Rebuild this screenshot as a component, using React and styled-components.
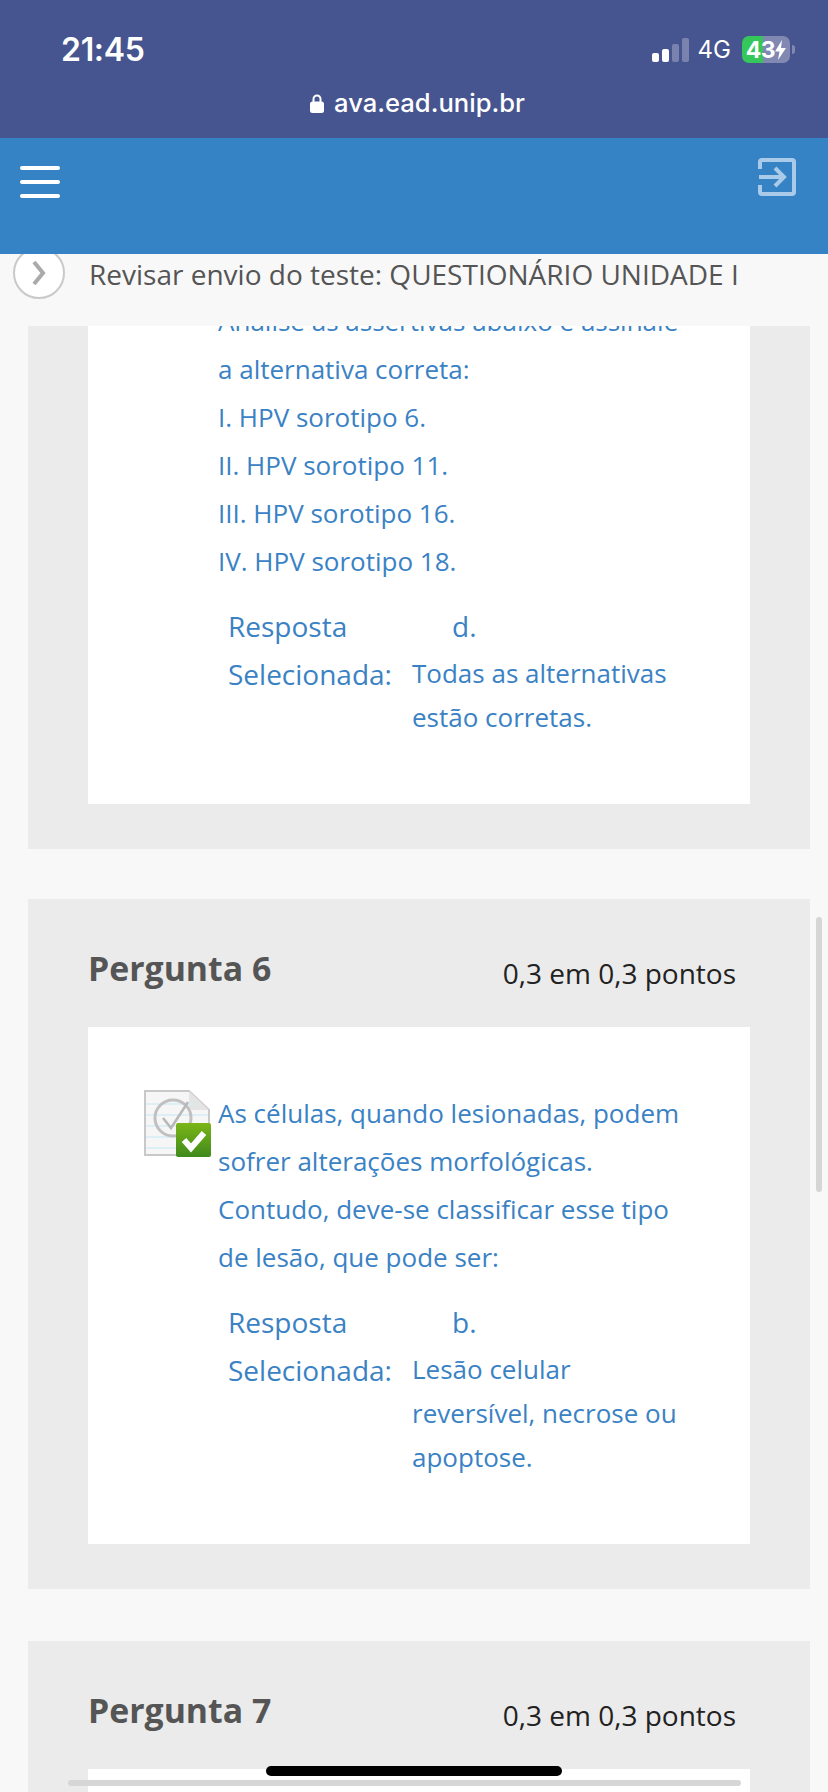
import React from 'react';
import styled, { createGlobalStyle } from 'styled-components';

const GlobalStyle = createGlobalStyle`
  html, body {
    margin: 0;
    padding: 0;
    background: #f8f8f8;
  }
  * {
    box-sizing: border-box;
  }
`;

const Screen = styled.div`
  position: relative;
  width: 828px;
  height: 1792px;
  overflow: hidden;
  display: flex;
  flex-direction: column;
  background: #f8f8f8;
  font-family: "Open Sans", "Noto Sans", sans-serif;
`;

const BrowserBar = styled.header`
  height: 138px;
  flex: none;
  padding: 0 38px 0 61px;
  background: #46558f;
  color: #fff;
  font-family: Inter, "Liberation Sans", sans-serif;
`;

const StatusRow = styled.div`
  height: 92px;
  display: flex;
  align-items: flex-start;
  justify-content: space-between;
  padding-top: 30px;
`;

const Clock = styled.span`
  font-size: 32px;
  line-height: 40px;
  font-weight: 600;
  letter-spacing: -0.3px;
`;

const StatusIcons = styled.div`
  display: flex;
  align-items: center;
  height: 27px;
  margin-top: 6px;
`;

const Network = styled.span`
  margin: 0 11px 0 9px;
  font-size: 24px;
  font-weight: 400;
`;

const Battery = styled.div`
  position: relative;
  width: 48px;
  height: 27px;
  display: flex;
  align-items: center;
  justify-content: center;
  border-radius: 7px;
  background: linear-gradient(90deg, #35c759 0 21px, #8189b3 21px);
  font-size: 23px;
  font-weight: 700;
  letter-spacing: -0.5px;

  &::after {
    content: '';
    position: absolute;
    right: -5px;
    top: 9px;
    width: 3px;
    height: 9px;
    border-radius: 0 3px 3px 0;
    background: #8189b3;
  }
`;

const AddressRow = styled.div`
  display: flex;
  align-items: center;
  justify-content: center;
  gap: 10px;
  margin: -1px -38px 0 -61px;
  padding-left: 7px;
  font-size: 25.6px;
  line-height: 24px;
  font-weight: 500;
`;

const TopBar = styled.div`
  position: relative;
  z-index: 1;
  height: 116px;
  flex: none;
  display: flex;
  justify-content: space-between;
  align-items: flex-start;
  padding: 20px 32px 0 20px;
  background: #3582c4;
`;

const MenuButton = styled.div`
  width: 40px;
  display: flex;
  flex-direction: column;
  gap: 10px;
  margin-top: 8px;
`;

const MenuLine = styled.span`
  height: 4px;
  border-radius: 2px;
  background: #fff;
`;

const PageTitleBar = styled.div`
  height: 72px;
  flex: none;
  display: flex;
  align-items: flex-start;
  gap: 24px;
  padding-left: 13px;
`;

const BackCircle = styled.div`
  width: 52px;
  height: 52px;
  flex: none;
  margin-top: -7px;
  display: flex;
  align-items: center;
  justify-content: center;
  border: 2px solid #c9c9c9;
  border-radius: 50%;
  background: #fff;
`;

const PageTitle = styled.h1`
  margin: 0;
  font-size: 28px;
  line-height: 40px;
  font-weight: 400;
  color: #555;
  white-space: nowrap;
`;

const Content = styled.main`
  flex: 1;
  overflow: hidden;
`;

const Panel = styled.section`
  margin: ${(p) => (p.$scrolled ? '-91px 18px 50px 28px' : '0 18px 52px 28px')};
  padding: 0 60px 45px;
  background: #ebebeb;
`;

const PanelHeader = styled.div`
  height: 128px;
  display: flex;
  align-items: baseline;
  justify-content: space-between;
  padding: 44px 14px 0 0;
`;

const PanelTitle = styled.h2`
  margin: 0;
  font-size: 33.8px;
  line-height: 50px;
  font-weight: 700;
  color: #555;
`;

const Points = styled.span`
  position: relative;
  top: 3px;
  font-size: 28px;
  color: #222;
`;

const Card = styled.div`
  padding: 62px 30px 65px 55px;
  background: #fff;
  color: #3a82c4;
`;

const Question = styled.div`
  display: flex;
  align-items: flex-start;
`;

const IconSlot = styled.div`
  width: 75px;
  flex: none;
`;

const QuestionLine = styled.p`
  margin: 0;
  font-size: 26px;
  line-height: 48px;
  white-space: nowrap;
`;

const Answer = styled.div`
  display: grid;
  grid-template-columns: 184px 1fr;
  margin: 17px 0 0 85px;
`;

const AnswerLabel = styled.div`
  font-size: 28px;
  line-height: 48px;
`;

const AnswerLetter = styled.div`
  padding-left: 40px;
  font-size: 28px;
  line-height: 49px;
`;

const AnswerText = styled.div`
  font-size: 26px;
  line-height: 44px;
  white-space: nowrap;
`;

const VerticalScroll = styled.div`
  position: absolute;
  left: 816px;
  top: 917px;
  width: 6px;
  height: 275px;
  border-radius: 3px;
  background: #d6d6d6;
`;

const HorizontalScroll = styled.div`
  position: absolute;
  left: 68px;
  top: 1780px;
  width: 673px;
  height: 6px;
  border-radius: 3px;
  background: #d6d6d6;
`;

const HomeIndicator = styled.div`
  position: absolute;
  left: 266px;
  top: 1766px;
  width: 296px;
  height: 10px;
  border-radius: 5px;
  background: #000;
`;

const SignalIcon = () => (
  <svg width="37" height="24" viewBox="0 0 37 24">
    <rect x="0" y="15" width="7" height="9" rx="2" fill="#fff" />
    <rect x="10" y="11" width="7" height="13" rx="2" fill="#fff" />
    <rect x="20" y="6" width="7" height="18" rx="2" fill="#7a83ae" />
    <rect x="30" y="0" width="7" height="24" rx="2" fill="#7a83ae" />
  </svg>
);

const BoltIcon = () => (
  <svg width="11" height="20" viewBox="0 0 11 20">
    <path d="M7 0 0 11.5h4.5L3 20l8-12H6z" fill="#fff" />
  </svg>
);

const LockIcon = () => (
  <svg width="14" height="19" viewBox="0 0 14 19">
    <path d="M3.5 8V5a3.5 3.5 0 0 1 7 0v3" fill="none" stroke="#fff" strokeWidth="2" />
    <rect x="0" y="7.5" width="14" height="11.5" rx="2.5" fill="#fff" />
  </svg>
);

const ExitIcon = () => (
  <svg width="38" height="38" viewBox="0 0 38 38" fill="none" stroke="#a9cbe9" strokeWidth="4">
    <path d="M2 11V4a2 2 0 0 1 2-2h30a2 2 0 0 1 2 2v30a2 2 0 0 1-2 2H4a2 2 0 0 1-2-2v-7" />
    <path d="M1 19h24M17 10l9 9-9 9" />
  </svg>
);

const ChevronIcon = () => (
  <svg width="16" height="26" viewBox="0 0 16 26" fill="none" stroke="#aaa" strokeWidth="4">
    <path d="M3 2l9 11-9 11" />
  </svg>
);

const CorrectIcon = () => (
  <svg width="68" height="68" viewBox="0 0 68 68">
    <defs>
      <linearGradient id="badge" x1="0" y1="0" x2="0" y2="1">
        <stop offset="0" stopColor="#7cb518" />
        <stop offset="1" stopColor="#3f8a1c" />
      </linearGradient>
    </defs>
    <path d="M2 2h44l20 19v45H2z" fill="#f6f6f6" stroke="#c8c8c8" strokeWidth="2" />
    <path d="M46 2v19h20z" fill="#e4e4e4" />
    <path d="M3 15h50M3 26h62M3 37h62M3 48h62M3 59h62" stroke="#d4ebf6" strokeWidth="1.5" />
    <circle cx="30" cy="29" r="18" fill="none" stroke="#c0c0c0" strokeWidth="3" />
    <path d="M20 29l8 10 17-26" fill="none" stroke="#b8b8b8" strokeWidth="2.5" />
    <rect x="33" y="34" width="35" height="34" rx="2" fill="url(#badge)" />
    <path d="M41 51l7 8 13-15" fill="none" stroke="#fff" strokeWidth="6" />
  </svg>
);

const QuestionCard = ({ lines, letter, answer, icon }) => (
  <Card>
    <Question>
      <IconSlot>{icon && <CorrectIcon />}</IconSlot>
      <div>
        {lines.map((line) => (
          <QuestionLine key={line}>{line}</QuestionLine>
        ))}
      </div>
    </Question>
    <Answer>
      <AnswerLabel>
        Resposta
        <br />
        Selecionada:
      </AnswerLabel>
      <div>
        <AnswerLetter>{letter}</AnswerLetter>
        <AnswerText>
          {answer.map((line) => (
            <div key={line}>{line}</div>
          ))}
        </AnswerText>
      </div>
    </Answer>
  </Card>
);

const App = () => (
  <Screen>
    <GlobalStyle />
    <BrowserBar>
      <StatusRow>
        <Clock>21:45</Clock>
        <StatusIcons>
          <SignalIcon />
          <Network>4G</Network>
          <Battery>
            43
            <BoltIcon />
          </Battery>
        </StatusIcons>
      </StatusRow>
      <AddressRow>
        <LockIcon />
        ava.ead.unip.br
      </AddressRow>
    </BrowserBar>

    <TopBar>
      <MenuButton>
        <MenuLine />
        <MenuLine />
        <MenuLine />
      </MenuButton>
      <ExitIcon />
    </TopBar>

    <PageTitleBar>
      <BackCircle>
        <ChevronIcon />
      </BackCircle>
      <PageTitle>Revisar envio do teste: QUESTIONÁRIO UNIDADE I</PageTitle>
    </PageTitleBar>

    <Content>
      <Panel $scrolled>
        <QuestionCard
          lines={[
            'Analise as assertivas abaixo e assinale',
            'a alternativa correta:',
            'I. HPV sorotipo 6.',
            'II. HPV sorotipo 11.',
            'III. HPV sorotipo 16.',
            'IV. HPV sorotipo 18.',
          ]}
          letter="d."
          answer={['Todas as alternativas', 'estão corretas.']}
        />
      </Panel>

      <Panel>
        <PanelHeader>
          <PanelTitle>Pergunta 6</PanelTitle>
          <Points>0,3 em 0,3 pontos</Points>
        </PanelHeader>
        <QuestionCard
          icon
          lines={[
            'As células, quando lesionadas, podem',
            'sofrer alterações morfológicas.',
            'Contudo, deve-se classificar esse tipo',
            'de lesão, que pode ser:',
          ]}
          letter="b."
          answer={['Lesão celular', 'reversível, necrose ou', 'apoptose.']}
        />
      </Panel>

      <Panel>
        <PanelHeader>
          <PanelTitle>Pergunta 7</PanelTitle>
          <Points>0,3 em 0,3 pontos</Points>
        </PanelHeader>
        <Card />
      </Panel>
    </Content>

    <VerticalScroll />
    <HomeIndicator />
    <HorizontalScroll />
  </Screen>
);

export default App;
